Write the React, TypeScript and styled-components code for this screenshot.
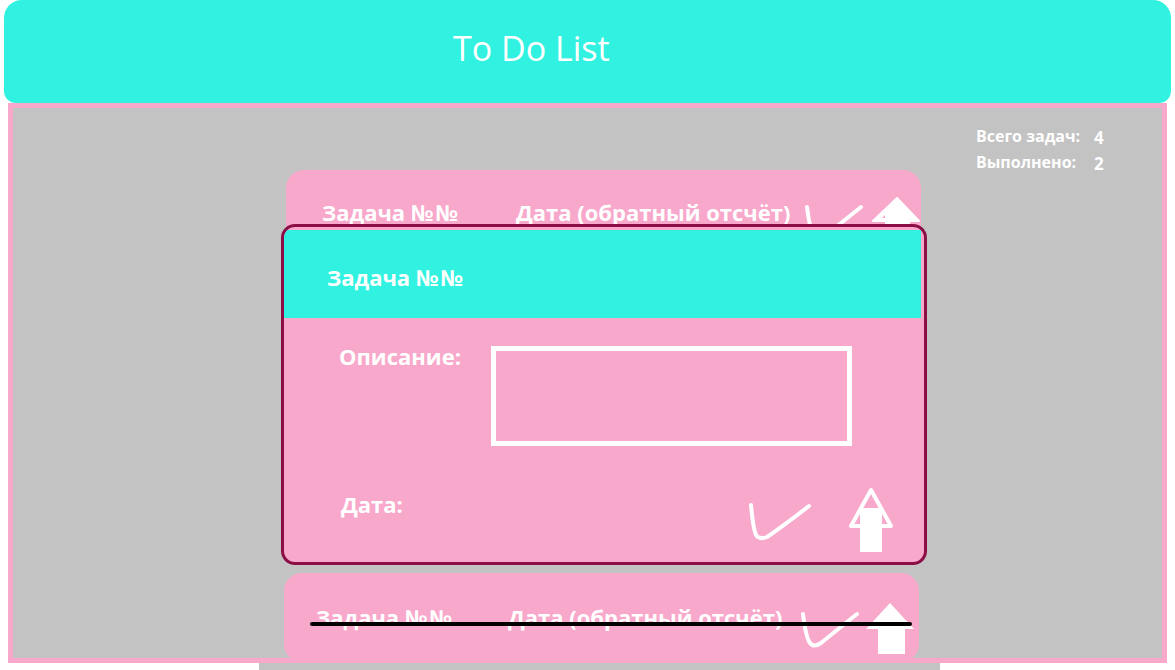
import React from 'react';
import styled, { createGlobalStyle } from 'styled-components';

const GlobalStyle = createGlobalStyle`
  html, body {
    margin: 0;
    padding: 0;
    background: #ffffff;
  }
  body {
    font-family: "Open Sans", "Liberation Sans", sans-serif;
  }
`;

const Page = styled.div`
  width: 1175px;
  height: 670px;
  overflow: hidden;
  display: flex;
  flex-direction: column;

  & > * {
    flex-shrink: 0;
  }
`;

const Header = styled.header`
  height: 103px;
  margin: 0 4px;
  box-sizing: border-box;
  padding-left: 449px;
  background: #31f2e0;
  border-radius: 18px 18px 12px 12px;
  display: flex;
  align-items: center;
`;

const Title = styled.h1`
  margin: 0 0 7px;
  font-size: 34px;
  font-weight: 400;
  line-height: 1;
  color: #ffffff;
`;

const Frame = styled.main`
  height: 560px;
  margin: 0 8px;
  box-sizing: border-box;
  padding-top: 16px;
  border: 5px solid #f8a8cb;
  background: #c3c3c3;
  display: flex;
  flex-direction: column;
  align-items: flex-start;
`;

const Stats = styled.div`
  height: 46px;
  margin-left: 963px;
  display: grid;
  grid-template-columns: 118px auto;
  align-content: start;
  color: #ffffff;
  font-weight: 700;
  font-size: 16px;
  line-height: 24px;
`;

const StatValue = styled.span`
  font-size: 17px;
  padding-top: 2px;
`;

const CardList = styled.div`
  width: 646px;
  margin-left: 268px;
  display: flex;
  flex-direction: column;
  align-items: flex-start;
`;

const TaskCard = styled.div<{ $left: number; $top: number; $pad: number; $height: number; $right: number }>`
  position: relative;
  width: 635px;
  height: ${(p) => p.$height}px;
  margin-left: ${(p) => p.$left}px;
  box-sizing: border-box;
  padding: ${(p) => p.$top}px ${(p) => p.$right}px 0 ${(p) => p.$pad}px;
  background: #f8a8cb;
  border-radius: 18px;
  display: flex;
  align-items: flex-start;
`;

const CardText = styled.span<{ $width?: number }>`
  ${(p) => (p.$width ? `width: ${p.$width}px;` : '')}
  margin-top: 5px;
  color: #ffffff;
  font-weight: 700;
  font-size: 22px;
  line-height: 1;
  white-space: nowrap;
`;

const NumSign = styled.span`
  letter-spacing: 2px;
`;

const CardIcons = styled.div`
  margin-left: auto;
  display: flex;
  align-items: flex-start;
  gap: 3px;
`;

const CheckSvg = styled.svg<{ $offset: number }>`
  margin-top: ${(p) => p.$offset}px;
  flex-shrink: 0;
`;

const Strike = styled.div`
  position: absolute;
  left: 26px;
  right: 7px;
  top: 49px;
  height: 4px;
  border-radius: 2px;
  background: #000000;
`;

const OpenCard = styled.section`
  position: relative;
  z-index: 1;
  width: 646px;
  height: 341px;
  margin-top: -30px;
  box-sizing: border-box;
  padding: 3px 3px 0 0;
  border: 3px solid #8b0f45;
  border-radius: 14px;
  background: #f8a8cb;
  overflow: hidden;
  display: flex;
  flex-direction: column;
`;

const OpenHeader = styled.div`
  height: 88px;
  padding: 6px 0 0 43px;
  box-sizing: border-box;
  background: #31f2e0;
  display: flex;
  align-items: center;
  color: #ffffff;
  font-weight: 700;
  font-size: 22px;
  line-height: 1;
`;

const OpenBody = styled.div`
  padding: 28px 26px 0 55px;
  display: flex;
  flex-direction: column;
`;

const FieldRow = styled.div<{ $gap?: number }>`
  margin-top: ${(p) => p.$gap ?? 0}px;
  display: flex;
  align-items: flex-start;
`;

const FieldLabel = styled.span<{ $width?: number; $top: number; $shift?: number }>`
  ${(p) => (p.$width ? `width: ${p.$width}px;` : '')}
  margin-top: ${(p) => p.$top}px;
  margin-left: ${(p) => p.$shift ?? 0}px;
  color: #ffffff;
  font-weight: 700;
  font-size: 22px;
  line-height: 1;
`;

const DescBox = styled.div`
  width: 361px;
  height: 100px;
  box-sizing: border-box;
  border: 5px solid #ffffff;
`;

const RowIcons = styled.div`
  margin-left: auto;
  display: flex;
  align-items: flex-start;
  gap: 35px;
`;

const Footer = styled.div`
  width: 681px;
  height: 10px;
  margin-left: 259px;
  background: #c3c3c3;
`;

const CardCheck = ({ offset }: { offset: number }) => (
  <CheckSvg $offset={offset} width="62" height="40" viewBox="0 0 62 40">
    <path
      d="M4 4 Q7 28 11 33 Q15 38 22 33 Q38 20 58 4"
      fill="none"
      stroke="#ffffff"
      strokeWidth="4"
      strokeLinecap="round"
    />
  </CheckSvg>
);

const CardArrow = ({ outlined }: { outlined?: boolean }) => (
  <svg width="52" height="56" viewBox="0 0 52 56">
    {outlined ? (
      <>
        <polygon points="29,2 5,25 51,25" fill="#ffffff" stroke="#ffffff" strokeWidth="2" strokeLinejoin="round" />
        <polygon points="14,22 17,19 17,22" fill="#f8a8cb" />
        <rect x="17" y="22" width="25" height="34" fill="#ffffff" />
      </>
    ) : (
      <>
        <polygon points="26,2 2,28 50,28" fill="#ffffff" />
        <rect x="14" y="28" width="27" height="25" fill="#ffffff" />
      </>
    )}
  </svg>
);

const BigCheck = () => (
  <CheckSvg $offset={12} width="64" height="44" viewBox="0 0 64 44">
    <path
      d="M3 5 Q5 28 8 35 Q11 40 19 37 Q38 24 61 6"
      fill="none"
      stroke="#ffffff"
      strokeWidth="4"
      strokeLinecap="round"
    />
  </CheckSvg>
);

const BigArrow = () => (
  <svg width="48" height="68" viewBox="0 0 48 68" style={{ marginTop: -2 }}>
    <polygon points="24,4 4,40 44,40" fill="none" stroke="#ffffff" strokeWidth="4" strokeLinejoin="round" />
    <rect x="13" y="22" width="22" height="44" fill="#ffffff" />
  </svg>
);

const TaskName = () => (
  <span>
    Задача <NumSign>№№</NumSign>
  </span>
);

export default function App() {
  return (
    <Page>
      <GlobalStyle />
      <Header>
        <Title>To Do List</Title>
      </Header>
      <Frame>
        <Stats>
          <span>Всего задач:</span>
          <StatValue>4</StatValue>
          <span>Выполнено:</span>
          <StatValue>2</StatValue>
        </Stats>
        <CardList>
          <TaskCard $left={5} $top={26} $pad={36} $right={1} $height={84}>
            <CardText $width={194}>
              <TaskName />
            </CardText>
            <CardText>Дата (обратный отсчёт)</CardText>
            <CardIcons>
              <CardCheck offset={7} />
              <CardArrow outlined />
            </CardIcons>
          </TaskCard>

          <OpenCard>
            <OpenHeader>
              <TaskName />
            </OpenHeader>
            <OpenBody>
              <FieldRow>
                <FieldLabel $width={152} $top={-1}>Описание:</FieldLabel>
                <DescBox />
              </FieldRow>
              <FieldRow $gap={42}>
                <FieldLabel $top={5} $shift={2}>Дата:</FieldLabel>
                <RowIcons>
                  <BigCheck />
                  <BigArrow />
                </RowIcons>
              </FieldRow>
            </OpenBody>
          </OpenCard>

          <TaskCard $left={3} $top={28} $pad={32} $right={3} $height={89} style={{ marginTop: 8 }}>
            <CardText $width={192}>
              <TaskName />
            </CardText>
            <CardText>Дата (обратный отсчёт)</CardText>
            <CardIcons>
              <CardCheck offset={9} />
              <CardArrow />
            </CardIcons>
            <Strike />
          </TaskCard>
        </CardList>
      </Frame>
      <Footer />
    </Page>
  );
}
